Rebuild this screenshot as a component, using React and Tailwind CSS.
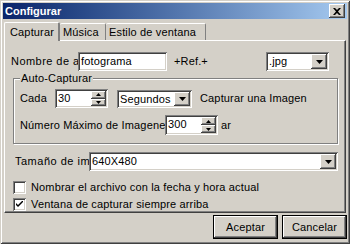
import React from "react";

const raised =
  "shadow-[inset_-1px_-1px_0_#404040,inset_1px_1px_0_#ffffff,inset_-2px_-2px_0_#808080,inset_2px_2px_0_#d4d0c8]";
const sunken =
  "shadow-[inset_1px_1px_0_#808080,inset_-1px_-1px_0_#ffffff,inset_2px_2px_0_#404040,inset_-2px_-2px_0_#d4d0c8]";

function Arrow({ up }) {
  return (
    <svg width="7" height="4" viewBox="0 0 7 4" className="block">
      {up ? (
        <polygon points="3.5,0 7,4 0,4" fill="#000" />
      ) : (
        <polygon points="0,0 7,0 3.5,4" fill="#000" />
      )}
    </svg>
  );
}

function SmallArrow({ up }) {
  return (
    <svg width="5" height="3" viewBox="0 0 5 3" className="block">
      {up ? (
        <polygon points="2.5,0 5,3 0,3" fill="#000" />
      ) : (
        <polygon points="0,0 5,0 2.5,3" fill="#000" />
      )}
    </svg>
  );
}

function DropBtn() {
  return (
    <div className={`w-[16px] h-full bg-[#d4d0c8] flex items-center justify-center ${raised}`}>
      <Arrow />
    </div>
  );
}

function Select({ value, w, h = "h-[19px]" }) {
  return (
    <div className={`${w} ${h} bg-white ${sunken} p-[2px] flex`}>
      <div className="flex-1 pl-[1px] leading-[15px] whitespace-nowrap overflow-hidden">{value}</div>
      <DropBtn />
    </div>
  );
}

function Spin({ value, w, h = "h-[20px]" }) {
  return (
    <div className={`${w} ${h} bg-white ${sunken} p-[2px] flex`}>
      <div className="flex-1 pl-[1px] leading-[15px] whitespace-nowrap overflow-hidden">{value}</div>
      <div className="w-[15px] h-full flex flex-col">
        <div className={`flex-1 bg-[#d4d0c8] flex items-center justify-center ${raised}`}>
          <SmallArrow up />
        </div>
        <div className={`flex-1 bg-[#d4d0c8] flex items-center justify-center ${raised}`}>
          <SmallArrow />
        </div>
      </div>
    </div>
  );
}

function Check({ checked, label }) {
  return (
    <div className="flex items-center h-[16px]">
      <div className={`w-[13px] h-[13px] bg-white ${sunken} flex items-center justify-center`}>
        {checked && (
          <svg width="7" height="7" viewBox="0 0 7 7" className="block">
            <path d="M0 2 L0 4 L2 6 L7 1 L7 -1 L2 4 Z" fill="#000" />
          </svg>
        )}
      </div>
      <span className="ml-[5px] whitespace-nowrap">{label}</span>
    </div>
  );
}

function Button({ children }) {
  return (
    <div className="w-[65px] h-[24px] border border-black">
      <div className={`w-full h-full bg-[#d4d0c8] flex items-center justify-center ${raised}`}>
        {children}
      </div>
    </div>
  );
}

export default function App() {
  return (
    <div
      className={`w-[350px] h-[244px] bg-[#d4d0c8] p-[3px] flex flex-col text-[11px] tracking-[0.15px] text-black font-['Liberation_Sans',Arial,sans-serif] shadow-[inset_1px_1px_0_#d4d0c8,inset_-1px_-1px_0_#404040,inset_2px_2px_0_#ffffff,inset_-2px_-2px_0_#808080]`}
    >
      {/* Title bar */}
      <div className="h-[16px] flex items-center bg-gradient-to-r from-[#0a246a] to-[#a6caf0] pl-[2px] pr-[2px]">
        <span className="text-white font-bold flex-1 leading-none tracking-normal">Configurar</span>
        <div className={`w-[16px] h-[14px] bg-[#d4d0c8] flex items-center justify-center ${raised}`}>
          <svg width="8" height="7" viewBox="0 0 8 7" className="block">
            <path d="M0 0 L2 0 L4 2 L6 0 L8 0 L5 3.5 L8 7 L6 7 L4 5 L2 7 L0 7 L3 3.5 Z" fill="#000" />
          </svg>
        </div>
      </div>

      {/* Tabs */}
      <div className="flex items-end h-[19px] mt-[2px] ml-[1px] relative z-10">
        <div className="w-[56px] h-[19px] bg-[#d4d0c8] border-l border-t border-white border-r-2 border-r-[#808080] rounded-t-[2px] pl-[5px] pt-[2px] -mb-[1px] leading-[14px] whitespace-nowrap">
          Capturar
        </div>
        <div className="w-[46px] h-[17px] border-t border-white border-r border-r-[#808080] rounded-t-[2px] pl-[3px] pt-[1px] leading-[14px] whitespace-nowrap">
          Música
        </div>
        <div className="w-[100px] h-[17px] border-t border-white border-r border-r-[#808080] rounded-t-[2px] pl-[3px] pt-[1px] leading-[14px] whitespace-nowrap overflow-hidden">
          Estilo de ventana
        </div>
      </div>

      {/* Panel */}
      <div className="h-[173px] mx-[1px] border border-white border-r-[#404040] border-b-[#404040] shadow-[inset_-1px_-1px_0_#808080] flex flex-col">
        {/* Row 1 */}
        <div className="flex items-center mt-[11px] h-[19px]">
          <div className="w-[67px] ml-[6px] whitespace-nowrap overflow-hidden tracking-[0.45px]">Nombre de archivo</div>
          <div className={`w-[89px] h-[19px] bg-white ${sunken} pl-[3px] leading-[19px]`}>fotograma</div>
          <span className="ml-[7px] w-[92px]">+Ref.+</span>
          <Select value=".jpg" w="w-[63px]" />
        </div>

        {/* Group */}
        <div className="relative ml-[8px] mt-[7px] w-[325px] h-[67px] border border-[#808080] shadow-[inset_1px_1px_0_#ffffff,1px_1px_0_#ffffff] flex flex-col">
          <span className="absolute -top-[8px] left-[6px] bg-[#d4d0c8] px-[1px] leading-[14px]">Auto-Capturar</span>
          <div className="flex items-center mt-[10px] h-[19px]">
            <span className="ml-[6px] w-[35px]">Cada</span>
            <Spin value="30" w="w-[53px]" h="h-[19px]" />
            <div className="ml-[9px]">
              <Select value="Segundos" w="w-[75px]" h="h-[18px]" />
            </div>
            <span className="ml-[8px] whitespace-nowrap">Capturar una Imagen</span>
          </div>
          <div className="flex items-center mt-[7px] h-[20px]">
            <div className="ml-[6px] w-[145px] whitespace-nowrap overflow-hidden">Número Máximo de Imagenes a capturar</div>
            <Spin value="300" w="w-[53px]" />
            <span className="ml-[3px]">ar</span>
          </div>
        </div>

        {/* Tamaño */}
        <div className="flex items-center mt-[8px] h-[19px]">
          <div className="ml-[10px] w-[74px] whitespace-nowrap overflow-hidden tracking-[0.5px]">Tamaño de imagen</div>
          <Select value="640X480" w="w-[249px]" />
        </div>

        <div className="ml-[8px] mt-[8px] flex flex-col gap-[1px]">
          <Check label="Nombrar el archivo con la fecha y hora actual" />
          <Check checked label="Ventana de capturar siempre arriba" />
        </div>
      </div>

      {/* Buttons */}
      <div className="flex justify-end gap-[4px] mt-[2px]">
        <Button>Aceptar</Button>
        <Button>Cancelar</Button>
      </div>
    </div>
  );
}
